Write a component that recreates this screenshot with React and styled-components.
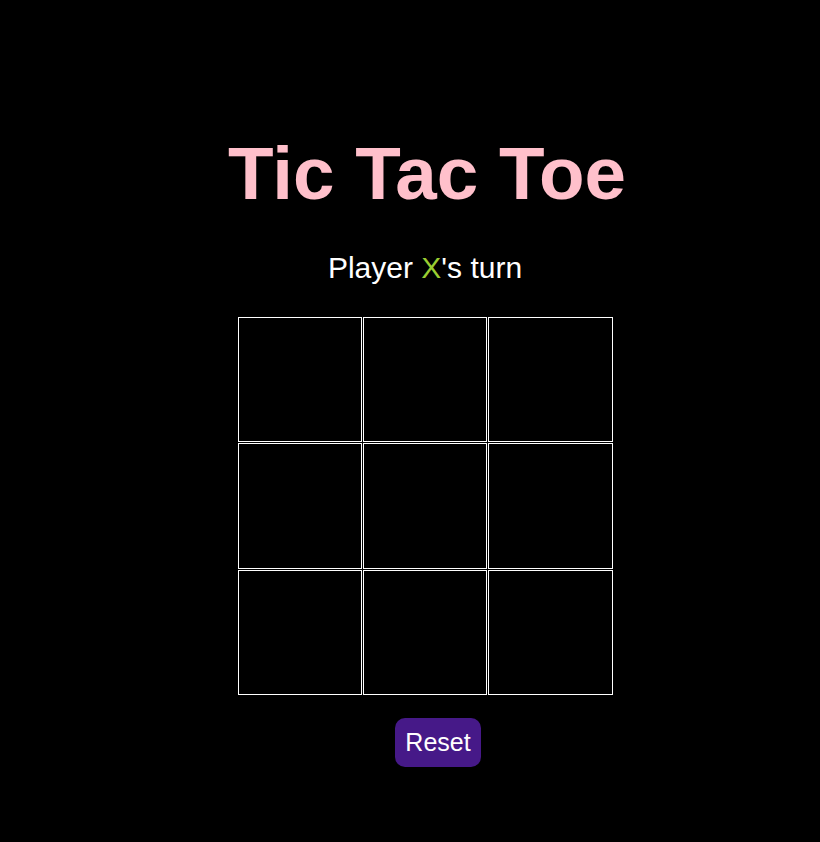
import styled, {createGlobalStyle} from 'styled-components'
import {useState} from 'react'

const GlobalStyle = createGlobalStyle`
  html, body {
    margin: 0;
    background: #000;
  }
  body {
    font-family: "Liberation Sans", Arial, sans-serif;
    color: #fff;
  }
`

const Container = styled.main`
  display: flex;
  flex-direction: column;
  align-items: center;
  padding: 130px 0 0 30px;
`

const Title = styled.h1`
  margin: 0 0 0 4px;
  font-size: 74.6px;
  line-height: 86px;
  font-weight: bold;
  color: pink;
`

const Status = styled.p`
  margin: 35px 0 0 0;
  font-size: 30px;
  line-height: 34px;
  > span {
    color: yellowgreen;
  }
`

const Board = styled.div`
  display: grid;
  grid-template-columns: repeat(3, 1fr);
  grid-template-rows: repeat(3, 1fr);
  gap: 1px;
  width: 375px;
  height: 378px;
  margin-top: 32px;
`

const Cell = styled.button`
  box-sizing: border-box;
  border: 1px solid #fff;
  background: #000;
  color: #fff;
  font-family: inherit;
  font-size: 64px;
  padding: 0;
  cursor: pointer;
`

const ResetButton = styled.button`
  margin: 23px 0 0 26px;
  padding: 0 10.5px;
  height: 49px;
  border: none;
  border-radius: 10px;
  background: #461988;
  color: #fff;
  font-family: inherit;
  font-size: 25px;
  cursor: pointer;
`

const App = () => {
  const [cells, setCells] = useState(Array(9).fill(null))
  const [xTurn, setXTurn] = useState(true)

  const handleClick = (i) => {
    if (cells[i]) return
    const next = [...cells]
    next[i] = xTurn ? 'X' : 'O'
    setCells(next)
    setXTurn(!xTurn)
  }

  const handleReset = () => {
    setCells(Array(9).fill(null))
    setXTurn(true)
  }

  return (
    <>
      <GlobalStyle />
      <Container>
        <Title>Tic Tac Toe</Title>
        <Status>
          Player <span>{xTurn ? 'X' : 'O'}</span>'s turn
        </Status>
        <Board>
          {cells.map((c, i) => (
            <Cell key={i} onClick={() => handleClick(i)}>
              {c}
            </Cell>
          ))}
        </Board>
        <ResetButton onClick={handleReset}>Reset</ResetButton>
      </Container>
    </>
  )
}

export default App
